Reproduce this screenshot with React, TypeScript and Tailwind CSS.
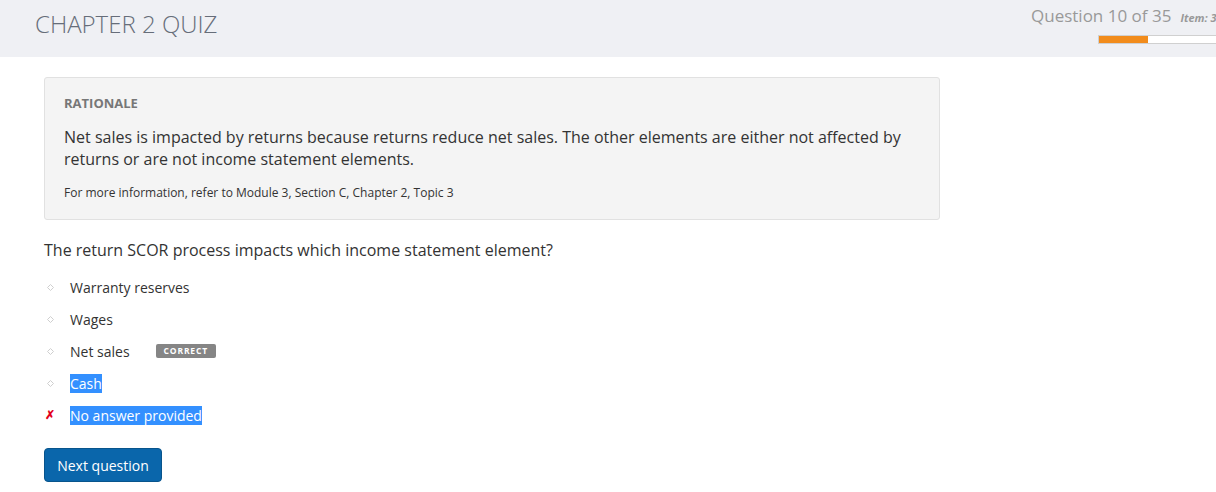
import React from "react";

const font = { fontFamily: '"Open Sans", "Noto Sans", sans-serif' };

function Bullet() {
  return (
    <svg width="7" height="7" viewBox="0 0 7 7" className="block">
      <path d="M3.5 0.5 L6.5 3.5 L3.5 6.5 L0.5 3.5 Z" fill="none" stroke="#cfcfcf" strokeWidth="1" />
    </svg>
  );
}

function Option({
  label,
  marker,
  highlight,
  badge,
}: {
  label: string;
  marker: "bullet" | "cross";
  highlight?: boolean;
  badge?: boolean;
}) {
  return (
    <div className="flex h-8 items-center">
      <div className="flex w-[26px] items-center pl-[1px]">
        {marker === "bullet" ? (
          <span className="ml-[2px]">
            <Bullet />
          </span>
        ) : (
          <span className="text-[12px] font-bold leading-none text-[#e3001b]">✗</span>
        )}
      </div>
      <span
        className={
          "text-[14px] leading-[19px] " +
          (highlight ? "bg-[#3390ff] text-white" : "text-[#333]")
        }
      >
        {label}
      </span>
      {badge && (
        <span className="ml-[26px] rounded-[2px] bg-[#858585] px-[8px] py-[2px] text-[8.5px] font-bold leading-[10px] tracking-[0.1em] text-white">
          CORRECT
        </span>
      )}
    </div>
  );
}

export default function App() {
  return (
    <div className="min-h-[492px] bg-white" style={font}>
      <header className="flex h-[57px] overflow-hidden bg-[#eff0f4] pl-[35px]">
        <div className="flex-1 pt-[6px] text-[24px] font-light leading-[36px] text-[#666d79]">
          CHAPTER 2 QUIZ
        </div>
        <div className="mr-[-40px] w-[225px] shrink-0 pt-[5px]">
          <div className="flex items-baseline whitespace-nowrap">
            <span className="text-[17px] leading-[22px] text-[#999]">Question 10 of 35</span>
            <span className="ml-[9px] text-[11px] font-bold italic text-[#999]">Item: 35</span>
          </div>
          <div className="ml-[67px] mt-[8px] h-[9px] w-[160px] border border-[#d0d0d0] bg-white">
            <div className="h-full w-[49px] bg-[#f28c1c]" />
          </div>
        </div>
      </header>

      <main className="px-[44px] pt-[20px]">
        <section className="w-[896px] rounded-[3px] border border-[#e1e1e1] bg-[#f4f4f4] px-[19px] pb-[18px] pt-[17px]">
          <div className="text-[13px] font-bold leading-[17px] text-[#777]">RATIONALE</div>
          <p className="mt-[14px] text-[16px] leading-[22px] text-[#333]">
            Net sales is impacted by returns because returns reduce net sales. The other elements are either not affected by
            returns or are not income statement elements.
          </p>
          <p className="mt-[14px] text-[12px] leading-[17px] text-[#333]">
            For more information, refer to Module 3, Section C, Chapter 2, Topic 3
          </p>
        </section>

        <p className="mt-[19px] text-[16px] leading-[22px] text-[#333]">
          The return SCOR process impacts which income statement element?
        </p>

        <div className="mt-[10px] flex flex-col">
          <Option label="Warranty reserves" marker="bullet" />
          <Option label="Wages" marker="bullet" />
          <Option label="Net sales" marker="bullet" badge />
          <Option label="Cash" marker="bullet" highlight />
          <Option label="No answer provided" marker="cross" highlight />
        </div>

        <button className="mt-[17px] h-[34px] w-[118px] rounded-[4px] border border-[#08548c] bg-[#0a66ab] text-[14px] text-white">
          Next question
        </button>
      </main>
    </div>
  );
}
